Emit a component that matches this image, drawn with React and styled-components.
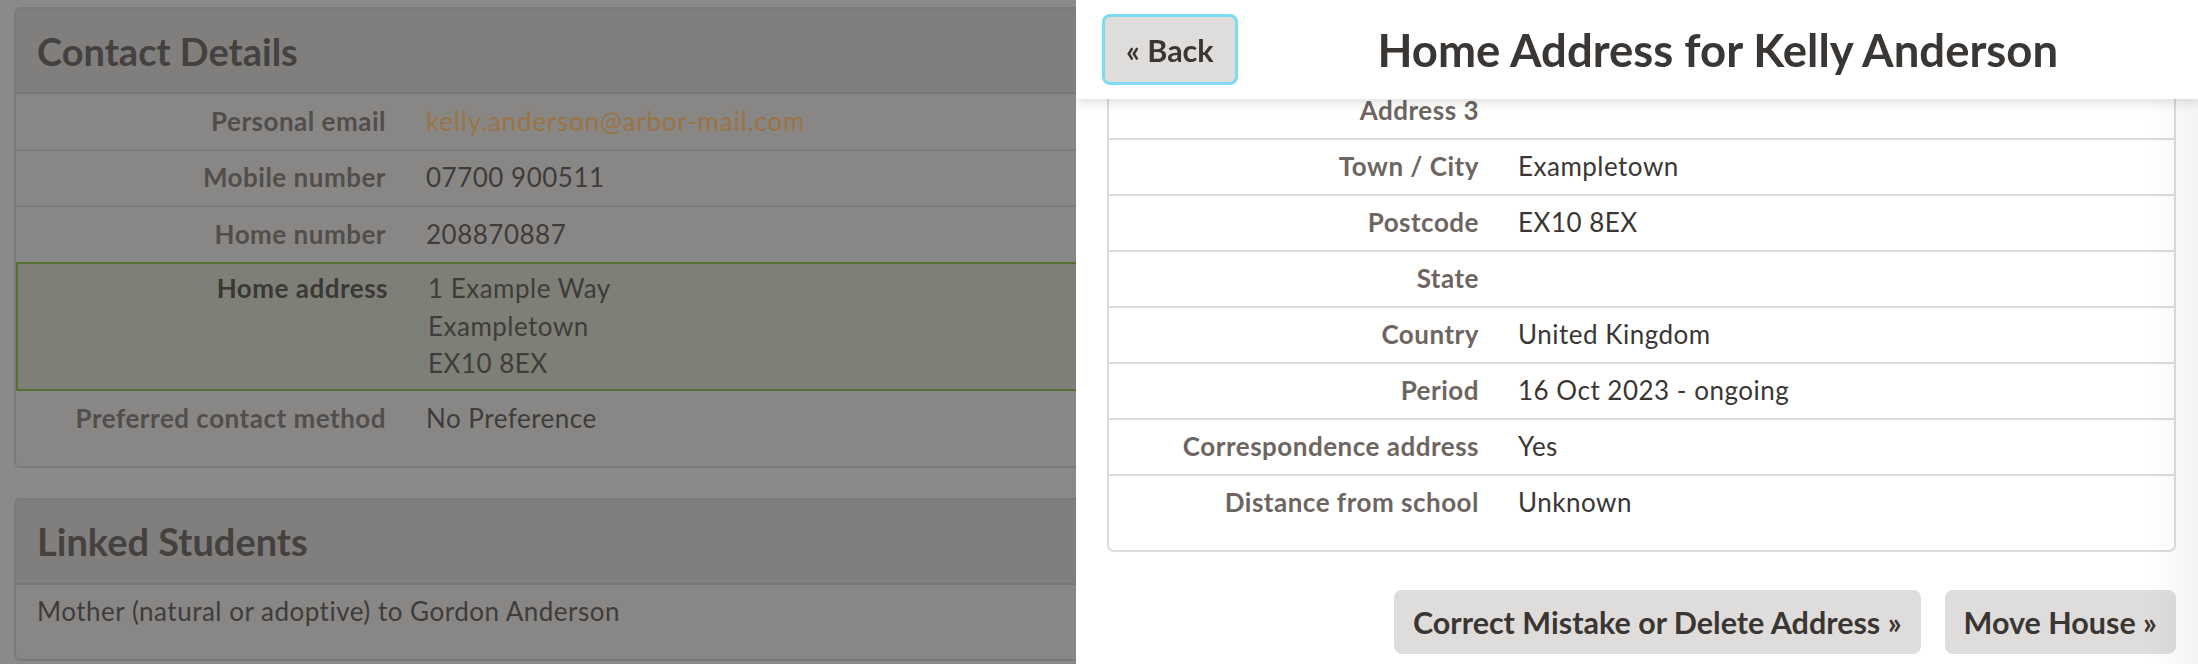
import { useLayoutEffect, useRef } from "react";
import styled, { createGlobalStyle } from "styled-components";

const GlobalStyle = createGlobalStyle`
  html, body {
    margin: 0;
    padding: 0;
  }
  body {
    background: #8a8a89;
    font-family: Lato, "Noto Sans", sans-serif;
    overflow: hidden;
  }
  * {
    box-sizing: border-box;
  }
`;

// ---- dimmed page behind the drawer ----

const Page = styled.div`
  display: flex;
  flex-direction: column;
  gap: 30px;
  padding: 7px 14px;
`;

const Card = styled.section`
  border: 2px solid #7b7a79;
  border-radius: 6px;
  background: #888786;
  padding-bottom: 20px;
  overflow: hidden;
`;

const CardHeader = styled.header`
  display: flex;
  align-items: center;
  height: 85px;
  padding: 0 21px;
  background: #807f7d;
  border-bottom: 2px solid #787776;

  h2 {
    margin: 0;
    font-size: 38px;
    font-weight: 700;
    color: #45413e;
  }
`;

const rowBorder = (p) => {
  if (p.$highlight) return "border: 2px solid #566f33;";
  if (p.$plain) return "border: none;";
  return "border-top: 2px solid #7d7c7a;";
};

const DetailRow = styled.div`
  display: grid;
  grid-template-columns: 370px 1fr;
  column-gap: 40px;
  padding: ${(p) => (p.$highlight ? "6.5px 0" : "8.5px 0")};
  font-size: 26px;
  letter-spacing: 0.5px;
  line-height: 37.5px;
  background: ${(p) => (p.$highlight ? "#7e7f76" : "transparent")};
  ${rowBorder}
`;

const DetailLabel = styled.div`
  text-align: right;
  font-weight: 700;
  color: ${(p) => (p.$strong ? "#3b3836" : "#524e4c")};
`;

const DetailValue = styled.div`
  color: ${(p) => (p.$link ? "#9a7444" : "#3f3c3a")};
  letter-spacing: ${(p) => (p.$link ? "0.8px" : "0.5px")};
  white-space: pre-line;
`;

const CardText = styled.p`
  margin: 0;
  padding: 8.5px 21px;
  font-size: 26px;
  letter-spacing: 0.5px;
  line-height: 37.5px;
  color: #3f3c3a;
`;

const contactRows = [
  { label: "Personal email", value: "kelly.anderson@arbor-mail.com", link: true },
  { label: "Mobile number", value: "07700 900511" },
  { label: "Home number", value: "208870887" },
  { label: "Home address", value: "1 Example Way\nExampletown\nEX10 8EX", highlight: true },
  { label: "Preferred contact method", value: "No Preference" },
];

// ---- slide-over drawer ----

const Drawer = styled.aside`
  position: fixed;
  top: 0;
  right: 0;
  bottom: 0;
  width: 1122px;
  background: #fff;

  &::after {
    content: "";
    position: absolute;
    top: 0;
    right: 0;
    bottom: 0;
    width: 50px;
    pointer-events: none;
    background: linear-gradient(to right, rgba(0, 0, 0, 0), rgba(0, 0, 0, 0.045));
  }
`;

const Scroller = styled.div`
  height: 100%;
  overflow-y: auto;
  scrollbar-width: none;

  &::-webkit-scrollbar {
    display: none;
  }
`;

const DrawerHeader = styled.header`
  position: sticky;
  top: 0;
  z-index: 2;
  display: flex;
  align-items: center;
  height: 99px;
  padding-left: 26px;
  background: #fff;
  box-shadow: 0 4px 10px rgba(0, 0, 0, 0.12);

  h1 {
    flex: 1;
    margin: 0;
    text-align: center;
    font-size: 45.5px;
    font-weight: 700;
    color: #3a3634;
  }
`;

const Button = styled.button`
  height: ${(p) => (p.$small ? "71px" : "64px")};
  padding: 0 ${(p) => (p.$small ? "21px" : "19px")};
  border: ${(p) => (p.$focused ? "3px solid #7ddaf0" : "none")};
  border-radius: 8px;
  background: #dfdddb;
  font-family: inherit;
  font-size: 30.5px;
  font-weight: 700;
  color: #3a3634;
  cursor: pointer;
`;

const DrawerBody = styled.div`
  padding: 20px 22px 10px 31px;
`;

const Table = styled.div`
  border: 2px solid #dcdcdc;
  border-radius: 0 0 7px 7px;
  padding-bottom: 20px;
`;

const TableRow = styled.div`
  display: grid;
  grid-template-columns: 370px 1fr;
  column-gap: 39px;
  padding: 8.25px 0;
  font-size: 26px;
  letter-spacing: 0.5px;
  line-height: 37.5px;

  & + & {
    border-top: 2px solid #dcdcdc;
  }
`;

const RowLabel = styled.div`
  text-align: right;
  font-weight: 700;
  color: #6d6561;
`;

const RowValue = styled.div`
  color: #3a3634;
`;

const Actions = styled.div`
  display: flex;
  justify-content: flex-end;
  gap: 24px;
  margin-top: 38px;
`;

const addressRows = [
  ["Address 1", "1 Example Way"],
  ["Address 2", ""],
  ["Address 3", ""],
  ["Town / City", "Exampletown"],
  ["Postcode", "EX10 8EX"],
  ["State", ""],
  ["Country", "United Kingdom"],
  ["Period", "16 Oct 2023 - ongoing"],
  ["Correspondence address", "Yes"],
  ["Distance from school", "Unknown"],
];

export default function App() {
  const scrollRef = useRef(null);

  useLayoutEffect(() => {
    const el = scrollRef.current;
    if (el) el.scrollTop = el.scrollHeight;
  }, []);

  return (
    <>
      <GlobalStyle />
      <Page>
        <Card>
          <CardHeader>
            <h2>Contact Details</h2>
          </CardHeader>
          {contactRows.map((row, i) => (
            <DetailRow
              key={row.label}
              $highlight={row.highlight}
              $plain={i === 0 || contactRows[i - 1].highlight}
            >
              <DetailLabel $strong={row.highlight}>{row.label}</DetailLabel>
              <DetailValue $link={row.link}>{row.value}</DetailValue>
            </DetailRow>
          ))}
        </Card>
        <Card>
          <CardHeader>
            <h2>Linked Students</h2>
          </CardHeader>
          <CardText>Mother (natural or adoptive) to Gordon Anderson</CardText>
        </Card>
      </Page>

      <Drawer>
        <Scroller ref={scrollRef}>
          <DrawerHeader>
            <Button $small $focused>« Back</Button>
            <h1>Home Address for Kelly Anderson</h1>
          </DrawerHeader>
          <DrawerBody>
            <Table>
              {addressRows.map(([label, value]) => (
                <TableRow key={label}>
                  <RowLabel>{label}</RowLabel>
                  <RowValue>{value}</RowValue>
                </TableRow>
              ))}
            </Table>
            <Actions>
              <Button>Correct Mistake or Delete Address »</Button>
              <Button>Move House »</Button>
            </Actions>
          </DrawerBody>
        </Scroller>
      </Drawer>
    </>
  );
}
